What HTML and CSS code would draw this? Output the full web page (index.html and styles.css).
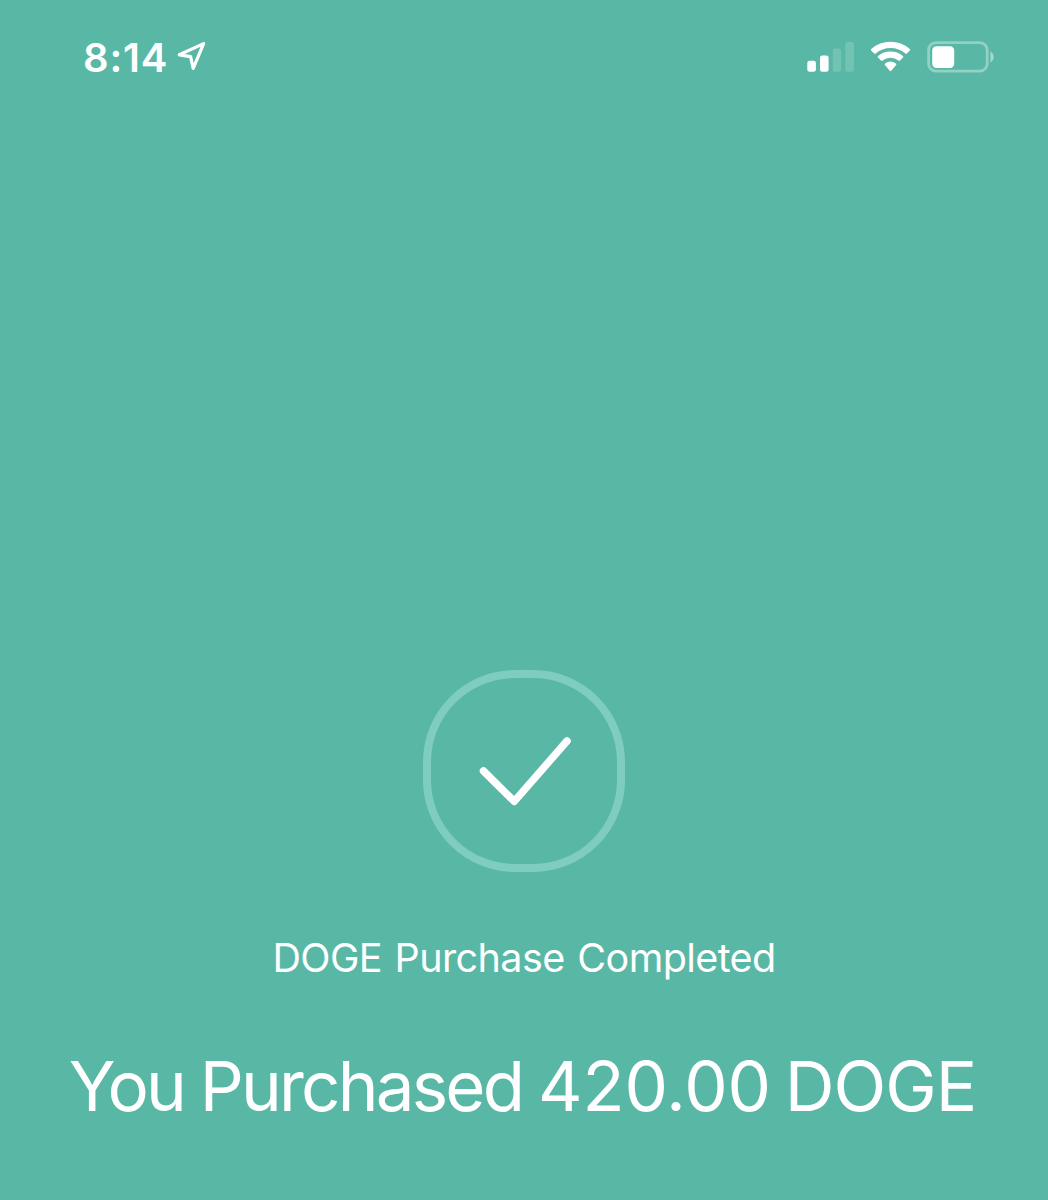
FILE: index.html
```
<!DOCTYPE html>
<html lang="en">
<head>
    <meta charset="UTF-8">
    <meta name="viewport" content="width=device-width, initial-scale=1.0">
    <title>Purchase Completed</title>
    <link rel="stylesheet" href="styles.css">
</head>
<body>

    <!-- Status bar -->
    <header class="status-bar">
        <div class="status-left">
            <span class="time">8:14</span>
            <svg class="location-icon" width="30" height="32" viewBox="0 0 30 32">
                <path d="M26.6 3.6 L2.3 14.8 L13.6 16.6 L16.2 28.4 Z" />
            </svg>
        </div>
        <div class="status-right">
            <svg class="signal-icon" width="47" height="32" viewBox="0 0 47 32">
                <rect x="0.3" y="19.7" width="8.6" height="11" rx="2.3" />
                <rect x="13" y="14.4" width="8.6" height="16.3" rx="2.3" />
                <rect class="bar-off" x="25.8" y="7.5" width="8.3" height="23.2" rx="2.3" />
                <rect class="bar-off" x="38.3" y="1" width="8.6" height="29.7" rx="2.3" />
            </svg>
            <svg class="wifi-icon" width="42" height="32" viewBox="0 0 42 32">
                <path d="M1.2 9.6 Q0.4 8.8 1.3 8 A29 29 0 0 1 39.7 8 Q40.6 8.8 39.8 9.6 L36.9 12.5 Q36.2 13.2 35.3 12.5 A22.5 22.5 0 0 0 5.7 12.5 Q4.8 13.2 4.1 12.5 Z" />
                <path d="M8 16.4 Q7.2 15.6 8.1 14.9 A19.5 19.5 0 0 1 32.9 14.9 Q33.8 15.6 33 16.4 L30 19.4 Q29.3 20.1 28.4 19.4 A13 13 0 0 0 12.6 19.4 Q11.7 20.1 11 19.4 Z" />
                <path d="M14.9 24 Q14.2 23.2 15.1 22.5 A9 9 0 0 1 25.9 22.5 Q26.8 23.2 26.1 24 L21.3 29.8 Q20.5 30.6 19.7 29.8 Z" />
            </svg>
            <svg class="battery-icon" width="68" height="32" viewBox="0 0 68 32">
                <rect class="battery-case" x="1.6" y="1.6" width="58.6" height="28.6" rx="7.5" />
                <rect x="5.2" y="5.2" width="22" height="21.8" rx="4.2" />
                <path class="battery-cap" d="M63.4 10.5 C67.7 12.5 67.7 19.5 63.4 21.5 Z" />
            </svg>
        </div>
    </header>

    <!-- Purchase result -->
    <main class="result">
        <div class="check-ring">
            <svg class="check-icon" width="94" height="72" viewBox="0 0 94 72">
                <path d="M5.5 36 L36.3 66.4 L89 6" />
            </svg>
        </div>
        <p class="subtitle">DOGE Purchase Completed</p>
        <h1 class="title">You Purchased <span class="amount">420.00</span> <span class="ticker">DOGE</span></h1>
    </main>

</body>
</html>
```

FILE: styles.css
```
* {
    box-sizing: border-box;
}

body, h1, p {
    margin: 0;
    padding: 0;
}

body {
    background-color: #59b8a5;
    color: white;
    font-family: 'Inter', sans-serif;
    height: 1200px;
    overflow: hidden;
}

svg {
    display: block;
    fill: white;
}

/* Status bar */
.status-bar {
    display: flex;
    justify-content: space-between;
    height: 114px;
    padding: 34px 53px 0 83px;
}

.status-left,
.status-right {
    display: flex;
    align-items: flex-start;
}

.time {
    font-size: 40px;
    line-height: 48px;
    font-weight: 600;
    letter-spacing: 0.8px;
}

.location-icon {
    margin: 6px 0 0 9px;
    fill: none;
    stroke: white;
    stroke-width: 3.2;
    stroke-linejoin: round;
}

.signal-icon,
.wifi-icon,
.battery-icon {
    margin-top: 7px;
}

.wifi-icon {
    margin-left: 16px;
}

.battery-icon {
    margin-left: 15px;
}

.bar-off {
    opacity: 0.16;
}

.battery-case {
    fill: none;
    stroke: white;
    stroke-width: 2.8;
    opacity: 0.35;
}

.battery-cap {
    opacity: 0.45;
}

/* Result */
.result {
    display: flex;
    flex-direction: column;
    align-items: center;
    padding-top: 556px;
}

.check-ring {
    display: flex;
    align-items: center;
    justify-content: center;
    width: 202px;
    height: 202px;
    border: 8px solid #7fcdbe;
    border-radius: 92px;
}

.check-icon {
    margin-left: 2px;
    fill: none;
    stroke: white;
    stroke-width: 7.5;
    stroke-linecap: round;
    stroke-linejoin: round;
}

.subtitle {
    margin-top: 62px;
    font-size: 39.5px;
    line-height: 48px;
    font-weight: 400;
    letter-spacing: -0.6px;
    word-spacing: 2.2px;
    white-space: nowrap;
}

.title {
    margin-top: 62px;
    padding-right: 3px;
    font-size: 69px;
    line-height: 84px;
    font-weight: 400;
    letter-spacing: -2.8px;
    word-spacing: -0.8px;
    white-space: nowrap;
}

.amount {
    letter-spacing: -0.1px;
}

.ticker {
    margin-left: -2px;
    letter-spacing: -1px;
}
```
